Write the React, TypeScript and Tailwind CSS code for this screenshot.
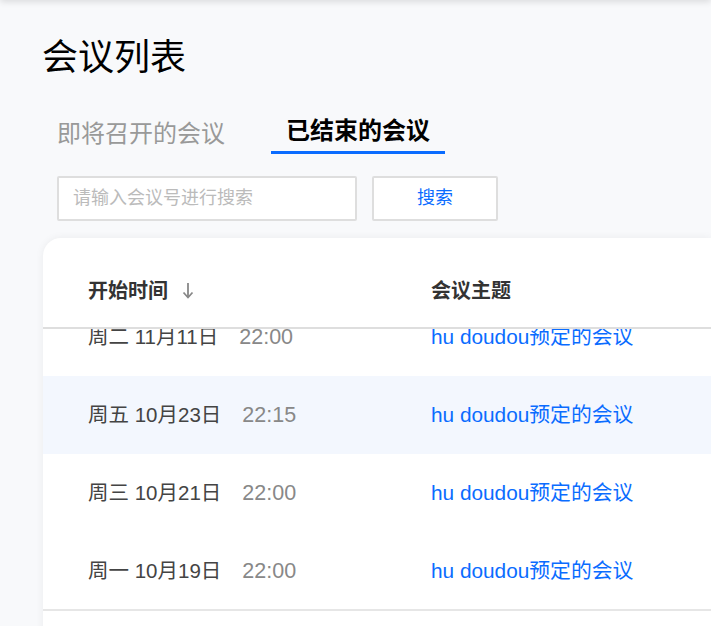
import React, {useState} from "react";

const font = {fontFamily: '"Liberation Sans", "Noto Sans CJK SC", sans-serif'};

type Meeting = {
    day: string
    date: string
    time: string
    subject: string
}

const meetings: Meeting[] = [
    {day: "周二", date: "11月11日", time: "22:00", subject: "hu doudou预定的会议"},
    {day: "周五", date: "10月23日", time: "22:15", subject: "hu doudou预定的会议"},
    {day: "周三", date: "10月21日", time: "22:00", subject: "hu doudou预定的会议"},
    {day: "周一", date: "10月19日", time: "22:00", subject: "hu doudou预定的会议"},
]

const App: React.FC = () => {
    const [tab, setTab] = useState(1)
    const [keyword, setKeyword] = useState("")

    return (
        <div className="relative h-[626px] w-[711px] overflow-hidden bg-[#f8f9fb]" style={font}>
            {/* shadow from the app bar above */}
            <div className="absolute inset-x-0 -top-2 h-2 shadow-[0_2px_6px_rgba(0,0,0,0.12)]"></div>

            <div className="pl-[42px] pt-[33px]">
                <h1 className="text-[36px] leading-[50px] text-black">会议列表</h1>
            </div>

            <div className="mt-[31px] flex pl-[57px]">
                <button
                    onClick={() => setTab(0)}
                    className={"text-[24px] leading-[34px] " + (tab === 0 ? "font-bold text-black" : "text-[#999]")}
                >
                    即将召开的会议
                </button>
                <div className="ml-[46px] flex w-[174px] flex-col items-center">
                    <button
                        onClick={() => setTab(1)}
                        className={"text-[24px] leading-[34px] " + (tab === 1 ? "font-bold text-black" : "text-[#999]")}
                    >
                        已结束的会议
                    </button>
                    <div className="mt-[3px] h-[3px] w-full bg-[#0a6cff]"></div>
                </div>
            </div>

            <div className="mt-[22px] flex gap-[15px] pl-[57px]">
                <input
                    value={keyword}
                    onChange={(e) => setKeyword(e.target.value)}
                    placeholder="请输入会议号进行搜索"
                    className="h-[45px] w-[300px] rounded-[2px] border-2 border-[#dedede] bg-white px-[14px] text-[18px] text-[#333] outline-none placeholder:text-[#bbb]"
                />
                <button
                    className="h-[45px] w-[126px] rounded-[2px] border-2 border-[#dedede] bg-white text-[18px] text-[#0a6cff]">
                    搜索
                </button>
            </div>

            <div
                className="ml-[43px] mt-[17px] h-[400px] rounded-tl-[18px] bg-white shadow-[0_0_8px_rgba(0,0,0,0.06)]">
                <div className="flex h-[91px] items-center border-b-2 border-[#dedede] pt-[17px]">
                    <div className="flex w-[388px] items-center pl-[45px] text-[20px] font-bold text-[#333]">
                        开始时间
                        <svg className="ml-[14px]" width="12" height="18" viewBox="0 0 12 18" fill="none">
                            <path d="M6 1v14" stroke="#888" strokeWidth="1.8"/>
                            <path d="M1.5 10.5L6 15.5l4.5-5" stroke="#888" strokeWidth="1.8"/>
                        </svg>
                    </div>
                    <div className="text-[20px] font-bold text-[#333]">会议主题</div>
                </div>
                <div className="h-[282px] overflow-hidden border-b-2 border-[#e6e6e6]">
                    <div className="-mt-[31px]">
                        {meetings.map((m, i) => (
                            <div
                                key={i}
                                className={"flex h-[78px] items-center " + (i === 1 ? "bg-[#f3f7fe]" : "")}
                            >
                                <div className="flex w-[388px] items-center pl-[45px]">
                                    <span className="text-[20.5px] text-[#444]">{m.day} {m.date}</span>
                                    <span className="ml-[21px] text-[21.5px] text-[#888]">{m.time}</span>
                                </div>
                                <div className="text-[20.8px] text-[#0a6cff]">{m.subject}</div>
                            </div>
                        ))}
                    </div>
                </div>
            </div>
        </div>
    );
}

export default App;
